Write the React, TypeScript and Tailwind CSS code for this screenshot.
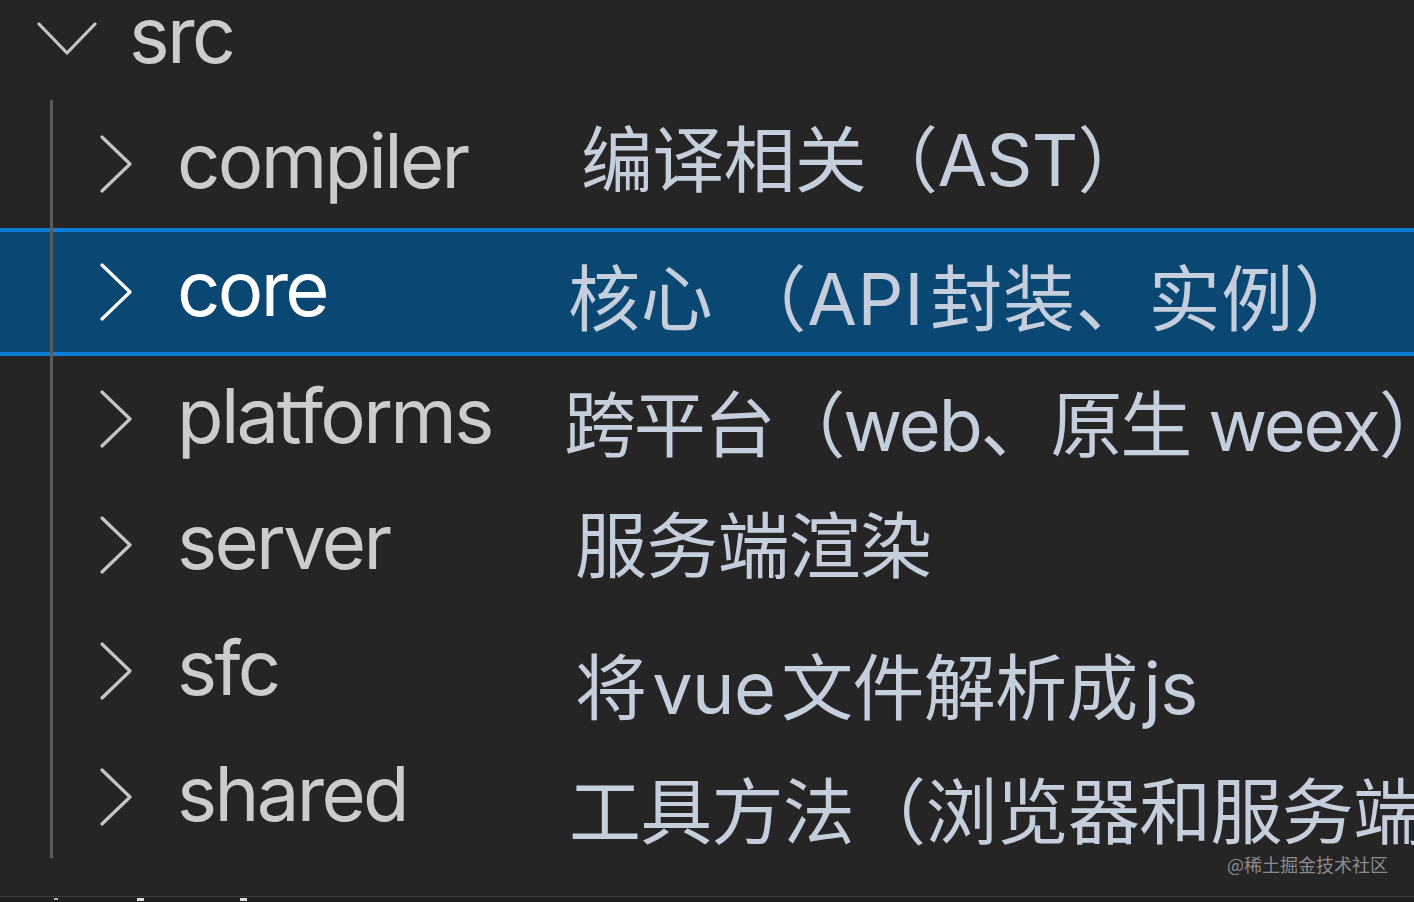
import { ReactNode } from "react";

type Row = {
    name: string
    note: ReactNode
    height: string
    noteClass: string
    selected?: boolean
}

// latin bits inside chinese notes get a little breathing room, like macOS autospacing
const L = ({ children, l = true, r = true }: { children: ReactNode, l?: boolean, r?: boolean }) => (
    <span className={`${l ? "pl-[6px]" : ""} ${r ? "pr-[6px]" : ""}`}>{children}</span>
)

const rows: Row[] = [
    { name: "compiler", note: "编译相关（AST）", height: "h-[128px]", noteClass: "ml-[14px] translate-y-[-4px] tracking-[-0.01em]" },
    { name: "core", note: <>核心 （<L l={false}>API</L>封装、实例）</>, height: "h-[128px]", noteClass: "ml-[1px] translate-y-[7px] tracking-[0.01em]", selected: true },
    { name: "platforms", note: "跨平台（web、原生 weex）", height: "h-[126px]", noteClass: "ml-[-3px] translate-y-[6px] tracking-[-0.03em]" },
    { name: "server", note: "服务端渲染", height: "h-[126px]", noteClass: "ml-[8px] translate-y-[1px] tracking-[-0.01em]" },
    { name: "sfc", note: <>将<L>vue</L>文件解析成<L r={false}>js</L></>, height: "h-[126px]", noteClass: "ml-[8px] translate-y-[17px] tracking-[-0.01em]" },
    { name: "shared", note: "工具方法（浏览器和服务端共享）", height: "h-[126px]", noteClass: "ml-[2px] translate-y-[15px] tracking-[-0.01em]" },
]

function ChevronRight({ color }: { color: string }) {
    return (
        <svg width="34" height="58" viewBox="0 0 34 58" className="shrink-0">
            <polyline points="3,2 31,29 3,56" fill="none" stroke={color} strokeWidth="3.2" strokeLinecap="round" strokeLinejoin="round" />
        </svg>
    )
}

function ChevronDown() {
    return (
        <svg width="60" height="34" viewBox="0 0 60 34" className="shrink-0">
            <polyline points="2,2 30,31 58,2" fill="none" stroke="#c5c5c5" strokeWidth="3.2" strokeLinecap="round" strokeLinejoin="round" />
        </svg>
    )
}

function FolderRow({ row }: { row: Row }) {
    const sel = row.selected
    return (
        <div className={`${row.height} flex items-center whitespace-nowrap ${sel ? "bg-[#0a4772] border-y-[4px] border-[#0b7fd3]" : ""}`}>
            <div className="pl-[99px] flex items-center">
                <ChevronRight color={sel ? "#ffffff" : "#c5c5c5"} />
            </div>
            <div className={`ml-[44px] w-[390px] shrink-0 text-[76px] tracking-[-0.035em] leading-none pb-[8px] ${sel ? "text-white" : "text-[#cccccc]"}`}>
                {row.name}
            </div>
            <div className={`${row.noteClass} font-['Inter','Noto_Sans_CJK_SC',sans-serif] text-[72px] leading-none text-[#c5cedd]`}>
                {row.note}
            </div>
        </div>
    )
}

export default function App() {
    return (
        <div className="relative w-[1414px] h-[902px] overflow-hidden bg-[#252526] font-['Inter','Noto_Sans_CJK_SC',sans-serif]">
            <div className="h-[100px] flex items-center pb-[22px] whitespace-nowrap">
                <div className="pl-[37px] flex items-center">
                    <ChevronDown />
                </div>
                <div className="ml-[32px] text-[77px] tracking-[-0.035em] leading-none pb-[8px] text-[#cccccc]">src</div>
            </div>
            <div className="relative">
                <div className="absolute left-[50px] top-0 bottom-[2px] w-[3px] bg-[#5b5b5b] z-10" />
                {rows.map((row, i) => (
                    <FolderRow row={row} key={i} />
                ))}
            </div>
            <div className="absolute right-[26px] bottom-[29px] text-[18px] leading-none text-[#8c8c8c] font-['Noto_Sans_CJK_SC',sans-serif]">
                @稀土掘金技术社区
            </div>
            <div className="absolute left-0 right-0 bottom-0 h-[6px] border-t border-[#3c3d3f] bg-[#1f1f20]">
                <div className="absolute left-[54px] top-[1px] w-[4px] h-[2px] bg-[#bbbbbb]" />
                <div className="absolute left-[137px] top-[1px] w-[7px] h-[3px] bg-[#dddddd]" />
                <div className="absolute left-[240px] top-[1px] w-[7px] h-[3px] bg-[#dddddd]" />
            </div>
        </div>
    )
}
